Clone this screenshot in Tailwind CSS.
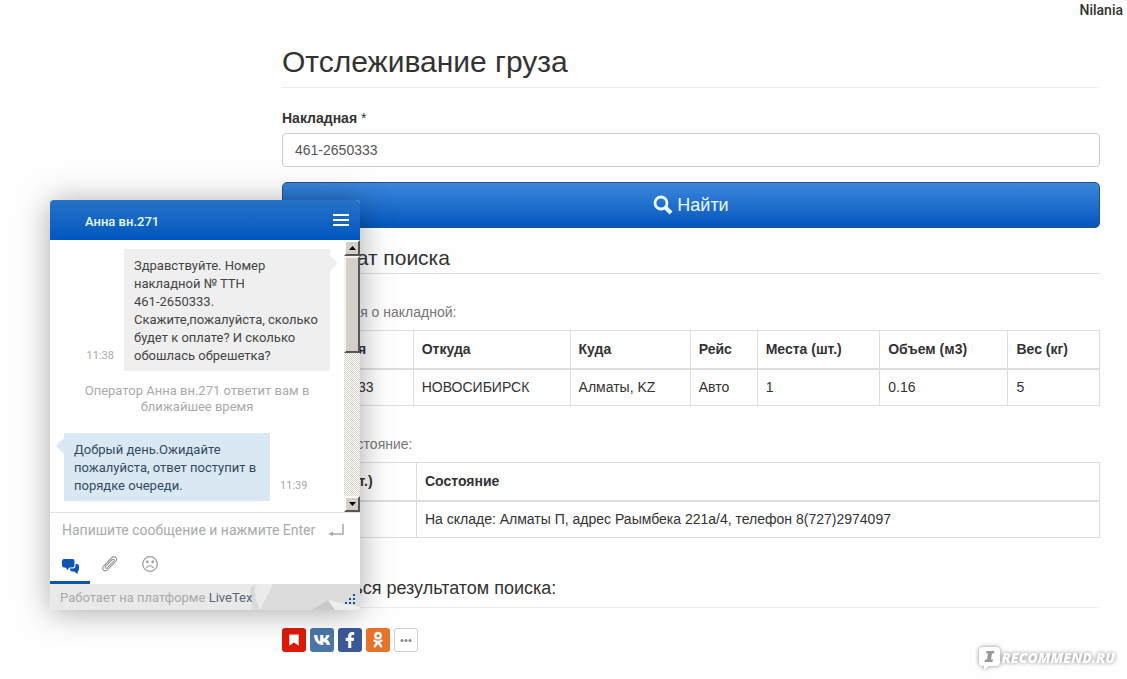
<!DOCTYPE html>
<html lang="ru">
<head>
<meta charset="utf-8">
<meta name="viewport" content="width=device-width, initial-scale=1">
<title>Отслеживание груза</title>
<script src="https://cdn.jsdelivr.net/npm/@tailwindcss/browser@4"></script>
</head>
<body class="relative min-h-screen bg-[#fefefe] font-['Liberation_Sans',Arial,sans-serif] text-[14px] leading-5 text-[#333]">
<header class="flex justify-end pr-1 font-['Roboto',sans-serif] font-medium">
  <a href="#" class="leading-5">Nilania</a>
</header>

<main class="ml-[282px] mr-[27px] flex flex-col">
  <h1 class="mt-6 border-b border-[#eee] pb-2 text-[30px] leading-[35px]">Отслеживание груза</h1>

  <form class="mt-5 flex flex-col" onsubmit="return false">
    <label for="waybill" class="text-[14px] font-bold leading-5">Накладная <span class="font-normal">*</span></label>
    <input id="waybill" type="text" value="461-2650333" class="mt-[5px] h-[34px] rounded-[4px] border border-[#ccc] bg-white px-3 text-[14px] text-[#555]">
    <button type="submit" class="mt-[15px] flex h-[46px] items-center justify-center gap-1 rounded-[5px] border border-[#245580] bg-linear-to-b from-[#3a86dc] to-[#0056bd] text-[18px] text-[#e8fbff]">
      <svg class="size-5" viewBox="0 0 20 20" fill="none" stroke="currentColor" aria-hidden="true"><circle cx="8" cy="8" r="6" stroke-width="2.8"/><path d="M12.5 12.5 18 18" stroke-width="4"/></svg>
      Найти
    </button>
  </form>

  <h2 class="mt-[18px] border-b border-[#ddd] pb-[3px] text-[21px] leading-6">Результат поиска</h2>

  <p class="mt-7 text-[14px] leading-5 text-[#777]">Информация о накладной:</p>
  <table class="mt-2 w-full table-fixed border-collapse border border-[#ddd] text-left">
    <colgroup><col class="w-[16%]"><col class="w-[19.2%]"><col class="w-[14.7%]"><col class="w-[8.2%]"><col class="w-[15%]"><col class="w-[15.7%]"><col></colgroup>
    <thead><tr class="h-[38px] border-b-2 border-[#ddd]">
      <th class="border-x border-[#ddd] px-2">Накладная</th><th class="border-x border-[#ddd] px-2">Откуда</th><th class="border-x border-[#ddd] px-2">Куда</th><th class="border-x border-[#ddd] px-2">Рейс</th><th class="border-x border-[#ddd] px-2">Места (шт.)</th><th class="border-x border-[#ddd] px-2">Объем (м3)</th><th class="border-x border-[#ddd] px-2">Вес (кг)</th>
    </tr></thead>
    <tbody><tr class="h-[37px]">
      <td class="border-x border-[#ddd] px-2">461-2650333</td><td class="border-x border-[#ddd] px-2">НОВОСИБИРСК</td><td class="border-x border-[#ddd] px-2">Алматы, KZ</td><td class="border-x border-[#ddd] px-2">Авто</td><td class="border-x border-[#ddd] px-2">1</td><td class="border-x border-[#ddd] px-2">0.16</td><td class="border-x border-[#ddd] px-2">5</td>
    </tr></tbody>
  </table>

  <p class="mt-7 text-[14px] leading-5 text-[#777]">Текущее состояние:</p>
  <table class="mt-2 w-full table-fixed border-collapse border border-[#ddd] text-left">
    <colgroup><col class="w-[16.4%]"><col></colgroup>
    <thead><tr class="h-[38px] border-b-2 border-[#ddd]"><th class="border-x border-[#ddd] px-2">Кол-во (шт.)</th><th class="border-x border-[#ddd] px-2">Состояние</th></tr></thead>
    <tbody><tr class="h-[37px]"><td class="border-x border-[#ddd] px-2">1</td><td class="border-x border-[#ddd] px-2">На складе: Алматы П, адрес Раымбека 221а/4, телефон 8(727)2974097</td></tr></tbody>
  </table>

  <h3 class="mt-[38px] border-b border-[#eee] pb-[7px] text-[18px] leading-6">Поделиться результатом поиска:</h3>

  <div class="mt-5 flex gap-1">
    <button type="button" aria-label="Закладки" class="size-6 rounded-[3px] bg-[#dc1a05] text-white"><svg viewBox="0 0 24 24" fill="currentColor"><path d="M7.3 6.5h9.4v11.2L12 14.6l-4.700 3.100z"/></svg></button>
    <button type="button" aria-label="ВКонтакте" class="size-6 rounded-[3px] bg-[#4a76a8] text-white"><svg viewBox="0 0 24 24" fill="currentColor"><path d="M12.800 17C7.500 17 4.500 13.300 4 7h3.400c.2 4.200 1.500 5.800 2.800 6.200V7h3.200v3.700c1.300-.2 2.500-1.800 3-3.700h3.200c-.4 2.100-1.900 3.900-3 4.600 1.100.5 2.900 2 3.700 5.400h-3.400c-.6-1.900-1.900-3.100-3.500-3.300V17z"/></svg></button>
    <button type="button" aria-label="Facebook" class="size-6 rounded-[3px] bg-[#3b5998] text-white"><svg viewBox="0 0 24 24" fill="currentColor"><path d="M10.200 20v-7.100H7.700V9.800h2.500V7.800C10.200 5.300 11.700 4 13.900 4c1 0 1.900.1 2.300.1v2.800h-1.500c-1.200 0-1.400.6-1.400 1.400v1.500h2.800l-.4 3.100h-2.400V20z"/></svg></button>
    <button type="button" aria-label="Одноклассники" class="size-6 rounded-[3px] bg-[#e7742b] text-white"><svg viewBox="0 0 24 24" fill="none" stroke="currentColor" stroke-width="2.300" stroke-linecap="round" stroke-linejoin="round"><circle cx="12" cy="7.700" r="2.700"/><path d="M8.500 12.600c2.100 1.500 4.900 1.500 7 0M12 14l-3.200 4.300M12 14l3.200 4.300"/></svg></button>
    <button type="button" aria-label="Ещё" class="size-6 rounded-[3px] border border-[#ccc] bg-white text-[#888]"><svg viewBox="0 0 22 22" fill="currentColor"><circle cx="7" cy="11.500" r="1.500"/><circle cx="11" cy="11.500" r="1.500"/><circle cx="15" cy="11.500" r="1.500"/></svg></button>
  </div>
</main>

<section aria-label="Чат" class="absolute left-[50px] top-[200px] flex w-[310px] flex-col overflow-hidden rounded-[4px] bg-white font-['Roboto',sans-serif] text-[13px] leading-[18px] shadow-[0_2px_32px_rgba(0,0,0,0.34)]">
  <div class="flex h-10 items-center justify-between bg-linear-to-b from-[#2572c8] to-[#0057bf] pl-[35px] pr-[11px] text-[#e8fbff]">
    <span class="pt-1 font-medium">Анна вн.271</span>
    <button type="button" aria-label="Меню" class="text-white"><svg class="h-4 w-4" viewBox="0 0 16 16" fill="currentColor"><path d="M0 2h16v2H0zM0 7h16v2H0zM0 12h16v2H0z"/></svg></button>
  </div>

  <div class="flex h-[273px] border-b border-[#e0e0e0]">
    <div class="flex flex-1 flex-col pt-[9px]">
      <div class="flex items-end justify-end gap-[10px] pr-[14px]">
        <time class="pb-[6px] text-[11px] text-[#aaa]">11:38</time>
        <div class="relative w-[206px] rounded-[2px] bg-[#efefef] pb-[6px] pl-[10px] pr-1 pt-2 leading-[18px] text-[#444]">Здравствуйте. Номер<br>накладной № ТТН<br>461-2650333.<br>Скажите,пожалуйста, сколько<br>будет к оплате? И сколько<br>обошлась обрешетка?
          <svg class="absolute left-full top-[6px] h-4 w-2" viewBox="0 0 8 16" fill="#efefef" aria-hidden="true"><path d="M0 0v16l8-8z"/></svg>
        </div>
      </div>
      <p class="mt-3 text-center leading-4 text-[#aaa]">Оператор Анна вн.271 ответит вам в<br>ближайшее время</p>
      <div class="mt-[18px] flex items-end gap-[10px] pl-[14px]">
        <div class="relative w-[206px] bg-[#dae8f4] pb-[6px] pl-[10px] pr-1 pt-2 leading-[18px] text-[#34495e]">Добрый день.Ожидайте<br>пожалуйста, ответ поступит в<br>порядке очереди.
          <svg class="absolute right-full top-[5px] h-4 w-2" viewBox="0 0 8 16" fill="#dae8f4" aria-hidden="true"><path d="M8 0v16L0 8z"/></svg>
        </div>
        <time class="pb-[6px] text-[11px] text-[#aaa]">11:39</time>
      </div>
    </div>
    <div class="flex w-4 flex-col bg-[repeating-conic-gradient(#fff_0_25%,#d4d0c8_0_50%)] bg-[length:2px_2px]">
      <button type="button" aria-label="Вверх" class="flex h-4 items-center justify-center border-2 border-[#fff] border-r-[#555] border-b-[#555] bg-[#d4d0c8]"><svg class="h-1 w-[7px]" viewBox="0 0 7 4"><path d="M0 4h7L3.500 0z"/></svg></button>
      <div class="h-[97px] border-2 border-[#f4f3f0] border-r-[#555] border-b-[#555] bg-[#d4d0c8]"></div>
      <button type="button" aria-label="Вниз" class="mt-auto flex h-4 items-center justify-center border-2 border-[#fff] border-r-[#555] border-b-[#555] bg-[#d4d0c8]"><svg class="h-1 w-[7px]" viewBox="0 0 7 4"><path d="M0 0h7L3.500 4z"/></svg></button>
    </div>
  </div>

  <div class="flex h-[34px] items-center justify-between pl-3 pr-4">
    <input type="text" aria-label="Сообщение" placeholder="Напишите сообщение и нажмите Enter" class="min-w-0 flex-1 text-[14px] placeholder:text-[#aaa]">
    <svg class="h-3 w-4" viewBox="0 0 16 12" fill="none" aria-hidden="true"><path d="M15 0v10H4" stroke="#aaa" stroke-width="1.500"/><path d="M0 10 5 7.500v4.500z" fill="#aaa"/></svg>
  </div>

  <div class="flex h-[37px] text-[#999]">
    <button type="button" aria-label="Чат" class="flex w-10 justify-center border-b-[3px] border-[#0d55a5] pt-3 text-[#0b55b3]"><svg class="h-[15px] w-[17px]" viewBox="0 0 17 15" fill="currentColor"><path d="M2 0h8.500q2 0 2 2v4.500q0 2-2 2H7.500q-2 1-1.500 3L3.500 8.500H2q-2 0-2-2V2q0-2 2-2z"/><path d="M13.500 5h1.500q2 0 2 2v3q0 2-1 2l-.5 3-3.500-2.500H10q-2 0-2-3h3q2.500 0 2.500-3z"/></svg></button>
    <button type="button" aria-label="Прикрепить файл" class="flex w-10 justify-center pt-[9px]"><svg class="size-4" viewBox="0 0 16 16" fill="none" stroke="currentColor" stroke-width="1.100" stroke-linecap="round" stroke-linejoin="round"><path d="M5.200 6.200 9.800 1.700c2.800-2.600 6.600.9 4 3.700L5.600 13.700c-2.900 2.800-6.600-.8-3.900-3.700l7.500-7.400M5.200 11.900c-1.300 1.200-2.700-.2-1.600-1.500L10.300 3.700c1.300-1.200 2.700.2 1.500 1.500z"/></svg></button>
    <button type="button" aria-label="Пожаловаться" class="flex w-10 justify-center pt-[9px]"><svg class="size-4" viewBox="0 0 16 16" fill="none" stroke="currentColor" stroke-width="1.200"><circle cx="8" cy="8" r="7.300"/><path d="M4.500 12q3.500-4.500 7 0"/><circle cx="5.300" cy="5.800" r=".8"/><circle cx="10.700" cy="5.800" r=".8"/></svg></button>
  </div>

  <footer class="relative flex h-[26px] items-center justify-between bg-[#e9e9e9] pl-[10px] pr-1 text-[#aaa]">
    <svg class="absolute inset-y-0 right-0 h-[26px] w-[114px]" viewBox="0 0 114 26" aria-hidden="true"><path d="M14 0h100v26H4l6-14z" fill="#dcdcdc"/><path d="M4 4 10 0l-2 9 6 5-4 12-5-9z" fill="#dadada"/><path d="M14 0h13l-6 12-7 14-5-13z" fill="#ececec"/><path d="M66 26 82 16l8 10z" fill="#cacaca"/><path d="M82 16l32 7v3H89z" fill="#ededed"/></svg>
    <span class="relative pt-px">Работает на платформе <a href="#" class="text-[#56647a]">LiveTex</a></span>
    <svg class="relative mt-1 size-3" viewBox="0 0 12 12" fill="#0b55a5" aria-hidden="true"><path d="M9 1h2v2H9zM5 5h2v2H5zM9 5h2v2H9zM1 9h2v2H1zM5 9h2v2H5zM9 9h2v2H9z"/></svg>
  </footer>
</section>

<div class="absolute right-3 top-[646px] flex items-center text-white drop-shadow-[0_0_2px_#888]">
  <svg class="h-6 w-6" viewBox="0 0 24 24" aria-hidden="true"><path d="M5 1h13q4 0 4 4v11q0 4-4 4H11l-5 4v-4H5q-4 0-4-4V5q0-4 4-4z" fill="#fff"/><path d="M8.500 5h8l-.5 2.500h-2l-1 6h2L14.500 16h-8l.5-2.500h2l1-6H8z" fill="#999"/></svg>
  <span class="font-['Open_Sans',sans-serif] text-[14px] font-extrabold italic leading-6">RECOMMEND.RU</span>
</div>
</body>
</html>
